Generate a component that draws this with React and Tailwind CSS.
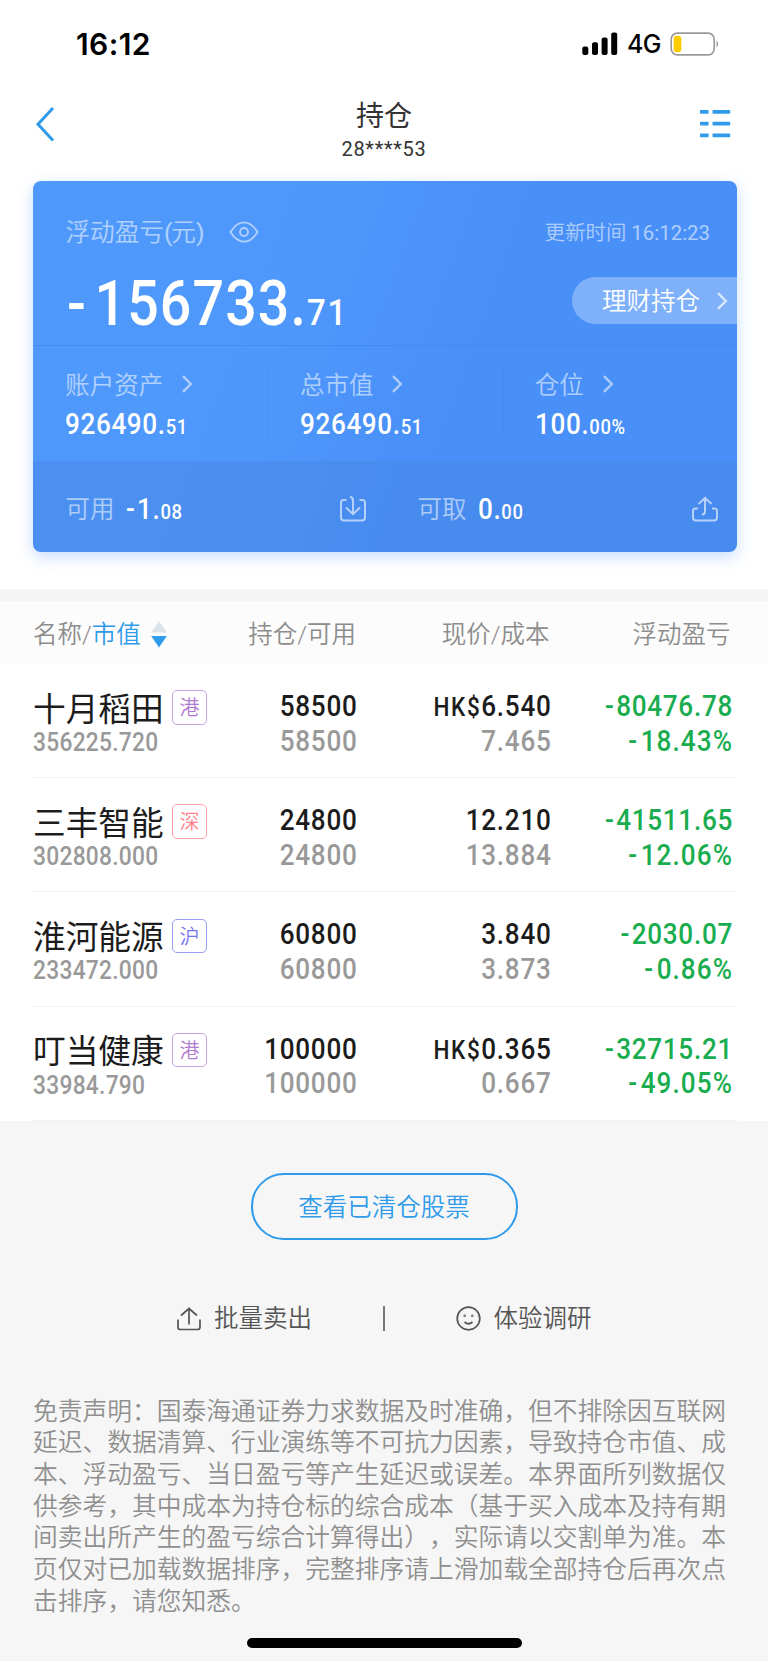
import React from 'react';

const holdings = [
    {name: '十月稻田', market: '港', value: '356225.720', amount: '58500', available: '58500', currency: 'HK$', price: '6.540', cost: '7.465', profit: '80476.78', rate: '18.43%'},
    {name: '三丰智能', market: '深', value: '302808.000', amount: '24800', available: '24800', currency: '', price: '12.210', cost: '13.884', profit: '41511.65', rate: '12.06%'},
    {name: '淮河能源', market: '沪', value: '233472.000', amount: '60800', available: '60800', currency: '', price: '3.840', cost: '3.873', profit: '2030.07', rate: '0.86%'},
    {name: '叮当健康', market: '港', value: '33984.790', amount: '100000', available: '100000', currency: 'HK$', price: '0.365', cost: '0.667', profit: '32715.21', rate: '49.05%'},
];

const marketColors = {
    '港': 'border-[#c9a2df] text-[#b07ad0]',
    '深': 'border-[#ffa3a8] text-[#ff8088]',
    '沪': 'border-[#9a9cf5] text-[#7376ea]',
};

const disclaimer = [
    '免责声明：国泰海通证券力求数据及时准确，但不排除因互联网',
    '延迟、数据清算、行业演练等不可抗力因素，导致持仓市值、成',
    '本、浮动盈亏、当日盈亏等产生延迟或误差。本界面所列数据仅',
    '供参考，其中成本为持仓标的综合成本（基于买入成本及持有期',
    '间卖出所产生的盈亏综合计算得出），实际请以交割单为准。本',
    '页仅对已加载数据排序，完整排序请上滑加载全部持仓后再次点',
    '击排序，请您知悉。',
];

const Chevron = ({className}) => (
    <svg className={className} width="12" height="18" viewBox="0 0 12 18" fill="none" stroke="currentColor" strokeWidth="2.4">
        <path d="M2 1.2L9.8 9L2 16.8"/>
    </svg>
);

const StatusBar = () => (
    <div className="flex h-[88px] items-center justify-between pl-[76px] pr-[48px]">
        <span className="font-['Inter',sans-serif] text-[30px] font-semibold leading-none tracking-[0.4px] text-black">16:12</span>
        <div className="flex items-center">
            <svg width="36" height="24" viewBox="0 0 36 24" fill="#000">
                <rect x="0.3" y="14.5" width="6" height="8.5" rx="2"/>
                <rect x="10" y="10.3" width="6" height="12.7" rx="2"/>
                <rect x="19.6" y="5.5" width="6" height="17.5" rx="2"/>
                <rect x="29.2" y="0.5" width="6" height="22.5" rx="2"/>
            </svg>
            <span className="ml-[9px] w-[34px] pt-[1px] font-['Inter',sans-serif] text-[25px] font-medium leading-none tracking-[-0.7px] text-black">4G</span>
            <svg className="ml-[9px]" width="50" height="24" viewBox="0 0 50 24" fill="none">
                <rect x="1.2" y="1.2" width="43" height="21.6" rx="6" stroke="#9b9b9b" strokeWidth="1.7"/>
                <rect x="3.7" y="3.7" width="7.6" height="16.6" rx="3" fill="#ffcc00"/>
                <path d="M46.5 8.5a4.6 4.6 0 0 1 0 7z" fill="#9b9b9b"/>
            </svg>
        </div>
    </div>
);

const NavBar = () => (
    <div className="flex h-[93px] justify-between pl-[34px] pr-[37px]">
        <svg className="mt-[18px]" width="24" height="36" viewBox="0 0 24 36" fill="none" stroke="#2f9bea" strokeWidth="3">
            <path d="M19 2L4 18.2L19 34.5"/>
        </svg>
        <div className="flex flex-col items-center pl-[11px]">
            <span className="mt-[14px] text-[28px] leading-[30px] text-[#333]">持仓</span>
            <span className="mt-[5px] text-[20px] leading-[24px] tracking-[0.7px] text-[#333]">28****53</span>
        </div>
        <svg className="mt-[21px]" width="32" height="30" viewBox="0 0 32 30" fill="#2f9bea">
            {[1, 12.8, 24.5].map((y) => (
                <g key={y}>
                    <rect x="1" y={y} width="8.6" height="3.8" rx="0.8"/>
                    <rect x="13.5" y={y} width="17.7" height="3.8" rx="0.8"/>
                </g>
            ))}
        </svg>
    </div>
);

// narrow tabular look for the figures on the card
const Amount = ({negative, whole, decimals}) => (
    <span className="inline-block origin-left scale-x-90 whitespace-nowrap font-medium text-white">
        <span className="text-[29px] tracking-[0.7px]">
            {negative && <span className="tracking-[2.5px]">-</span>}{whole}.
        </span>
        <span className="text-[20.5px] tracking-[0.7px]">{decimals}</span>
    </span>
);

const Stat = ({label, whole, decimals}) => (
    <div className="w-[234.7px] shrink-0">
        <div className="flex h-[30px] items-center font-[350] text-white/55">
            <span className="pt-[3px] text-[24.5px] leading-[30px]">{label}</span>
            <Chevron className="ml-[18px]"/>
        </div>
        <div className="mt-[9px] leading-[32px]"><Amount whole={whole} decimals={decimals}/></div>
    </div>
);

const SummaryCard = () => (
    <div className="ml-[32.5px] h-[371px] w-[704.5px] overflow-hidden rounded-[8px] bg-[linear-gradient(110deg,#5099fc_0%,#4f98fb_35%,#488ff8_60%,#488ff8_100%)] shadow-[0_5px_16px_rgba(72,143,248,0.3)]">
        <div className="h-[165px] border-b border-[#438bf0] pl-[33px]">
            <div className="flex h-[82px] items-center pt-[19px] font-[350] text-white/55">
                <span className="pt-[3px] text-[24.6px] leading-[30px]">浮动盈亏<span className="font-normal tracking-[-1px]">(</span>元<span className="font-normal">)</span></span>
                <svg className="ml-[25px]" width="30" height="24" viewBox="0 0 30 24" fill="none" stroke="currentColor" strokeWidth="1.8">
                    <path d="M1.5 12C5.5 5.5 9.5 2.3 15 2.3S24.5 5.5 28.5 12C24.5 18.5 20.5 21.7 15 21.7S5.5 18.5 1.5 12z"/>
                    <circle cx="15" cy="12" r="4"/>
                </svg>
                <span className="ml-auto mr-[27px] pt-[3px] text-[20.4px] leading-[30px]">更新时间 <span className="font-normal">16:12:23</span></span>
            </div>
            <div className="flex items-start justify-between">
                <div className="mt-[6px] w-[300px] origin-left scale-x-[0.88] whitespace-nowrap pl-[1px] font-medium leading-[70px] text-white">
                    <span className="text-[63px] tracking-[1.3px]"><span className="tracking-[10px]">-</span>156733.</span>
                    <span className="text-[37.5px] tracking-[2px]">71</span>
                </div>
                <div className="mt-[14px] flex h-[47px] w-[165px] items-center rounded-l-full bg-white/30 pl-[30px] text-white">
                    <span className="pt-[3px] text-[24.5px] font-[350] leading-[30px]">理财持仓</span>
                    <Chevron className="ml-[16px] opacity-70"/>
                </div>
            </div>
        </div>
        <div className="relative flex h-[115px] pl-[32.8px] pt-[23px]">
            <Stat label="账户资产" whole="926490" decimals="51"/>
            <Stat label="总市值" whole="926490" decimals="51"/>
            <Stat label="仓位" whole="100" decimals="00%"/>
            <div className="absolute left-[235px] top-[23px] h-[67px] border-l border-dotted border-[#3f86ea]"/>
            <div className="absolute left-[470px] top-[23px] h-[67px] border-l border-dotted border-[#3f86ea]"/>
        </div>
        <div className="flex h-[91px] items-center bg-[#4585e0]/40 pl-[33px] pt-[5px]">
            <span className="w-[60px] pt-[2px] text-[24.5px] font-[350] text-white/55">可用</span>
            <span className="w-[214px] pt-[2px]"><Amount negative whole="1" decimals="08"/></span>
            <svg className="text-white/60" width="26" height="26" viewBox="0 0 26 26" fill="none" stroke="currentColor" strokeWidth="2">
                <path d="M6.5 4H3.5Q1 4 1 6.5V21.5Q1 24.5 4 24.5H22Q25 24.5 25 21.5V6.5Q25 4 22.5 4H19.5M10 1Q13 1 13 4.5V18M6 11.5L13 18.2L20 11.5"/>
            </svg>
            <span className="ml-[52px] w-[60px] pt-[2px] text-[24.5px] font-[350] text-white/55">可取</span>
            <span className="pt-[2px]"><Amount whole="0" decimals="00"/></span>
            <svg className="ml-auto mr-[19px] text-white/60" width="26" height="26" viewBox="0 0 26 26" fill="none" stroke="currentColor" strokeWidth="2">
                <path d="M6 12.5H3.5Q1 12.5 1 15V21.5Q1 24.5 4 24.5H22Q25 24.5 25 21.5V15Q25 12.5 22.5 12.5H20M10 18.5Q13 18.5 13 15V2M6.5 8L13 1.8L19.5 8"/>
            </svg>
        </div>
    </div>
);

const TableHeader = () => (
    <div className="flex h-[75px] items-center border-t-[12px] border-[#f5f5f5] bg-[#fcfcfc] pl-[33px] pt-[5px] text-[24.5px] font-[350] text-[#8c8c8c]">
        <div className="flex w-[160px] items-center whitespace-nowrap">
            <span>名称/</span>
            <span className="text-[#2f9bea]">市值</span>
            <svg className="mb-[3px] ml-[10px]" width="16" height="28" viewBox="0 0 16 28">
                <path d="M8 1L15.8 12.5H0.2z" fill="#dce4ea"/>
                <path d="M8 27.5L15.8 16H0.2z" fill="#2f9bea"/>
            </svg>
        </div>
        <span className="w-[163px] text-right">持仓/可用</span>
        <span className="w-[193.5px] text-right">现价/成本</span>
        <span className="w-[181px] text-right">浮动盈亏</span>
    </div>
);

const HoldingRow = ({holding}) => (
    <div className="ml-[32px] mr-[31px] flex h-[114.2px] border-b-[1.5px] border-[#f2f2f2] pl-[1px] pt-[25px] text-[29px] font-medium leading-[34.5px] tracking-[0.8px]">
        <div className="w-[180px] whitespace-nowrap pt-[2px]">
            <div className="flex h-[36px] items-center">
                <span className="pt-[2px] text-[32.7px] font-normal tracking-normal text-[#1c1c1c]">{holding.name}</span>
                <span className={`mb-[3px] ml-[8.5px] flex size-[34.5px] shrink-0 items-center justify-center rounded-[5px] border-[1.3px] pt-[2px] text-[20px] font-[350] tracking-normal ${marketColors[holding.market]}`}>
                    {holding.market}
                </span>
            </div>
            <div className="origin-left scale-x-90 text-[25.3px] leading-[32px] tracking-[0.3px] text-[#999]">{holding.value}</div>
        </div>
        <div className="w-[144.5px] origin-right scale-x-90 text-right">
            <div className="text-[#1c1c1c]">{holding.amount}</div>
            <div className="text-[#999]">{holding.available}</div>
        </div>
        <div className="w-[193.5px] origin-right scale-x-90 text-right">
            <div className="text-[#1c1c1c]"><span className="text-[25px] leading-none tracking-[1.8px]">{holding.currency}</span>{holding.price}</div>
            <div className="text-[#999]">{holding.cost}</div>
        </div>
        <div className="w-[182px] origin-right scale-x-90 text-right text-[#1aad50]">
            <div><span className="tracking-[2.5px]">-</span>{holding.profit}</div>
            <div className="tracking-[1.2px]"><span className="tracking-[4px]">-</span>{holding.rate}</div>
        </div>
    </div>
);

const Footer = () => (
    <div className="flex h-[540.5px] flex-col items-center bg-[#f6f6f6]">
        <button className="mt-[52px] h-[67px] w-[267px] rounded-[33px] border-2 border-[#2f9bea] pt-[4px] text-[24.5px] font-[350] text-[#2f9bea]">
            查看已清仓股票
        </button>
        <div className="mt-[59px] flex h-[40px] w-full items-center text-[24.5px] font-[350] text-[#555]">
            <svg className="ml-[177px]" width="24" height="24" viewBox="0 0 24 24" fill="none" stroke="currentColor" strokeWidth="1.7">
                <path d="M1 12.5V20Q1 22.5 3.5 22.5H20.5Q23 22.5 23 20V12.5M12 17.5V1.5M4 8.5L12 1.5L20 8.5"/>
            </svg>
            <span className="ml-[13px] w-[169px] pt-[2px]">批量卖出</span>
            <span className="h-[25px] w-[1.5px] bg-[#777]"/>
            <svg className="ml-[71px]" width="25" height="25" viewBox="0 0 25 25" fill="none" stroke="currentColor" strokeWidth="1.7">
                <circle cx="12.5" cy="12.5" r="11.3"/>
                <path d="M8.5 16Q12.5 19.5 16.5 16"/>
                <circle cx="8.7" cy="9.8" r="0.4"/>
                <circle cx="16.3" cy="9.8" r="0.4"/>
            </svg>
            <span className="ml-[13px] pt-[2px]">体验调研</span>
        </div>
        <div className="mt-[57px] w-[702px] whitespace-nowrap text-[24.75px] font-[350] leading-[31.65px] text-[#8f8f8f] [text-spacing-trim:space-all]">
            {disclaimer.map((line) => <div key={line}>{line}</div>)}
        </div>
        <div className="mb-[13.5px] ml-[1px] mt-auto h-[9.5px] w-[275px] shrink-0 rounded-full bg-black"/>
    </div>
);

const App = () => (
    <div className="h-[1662px] w-[768px] overflow-hidden bg-white font-['Roboto','Noto_Sans_CJK_SC',sans-serif]">
        <StatusBar/>
        <NavBar/>
        <SummaryCard/>
        <div className="mt-[37px]">
            <TableHeader/>
            {holdings.map((holding) => <HoldingRow key={holding.name} holding={holding}/>)}
        </div>
        <Footer/>
    </div>
);

export default App;
